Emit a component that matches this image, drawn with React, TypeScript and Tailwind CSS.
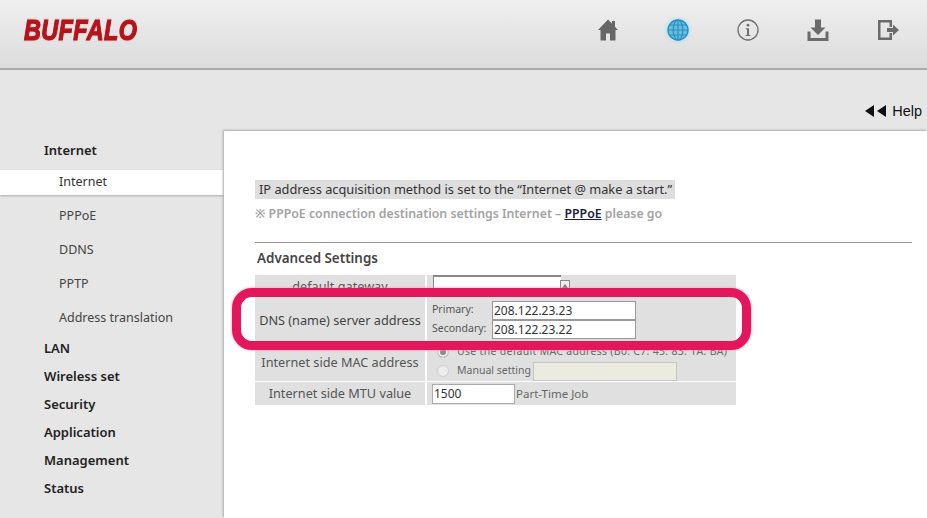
const font = { fontFamily: '"Noto Sans", "Noto Sans CJK JP", sans-serif' };

function Home() {
  return (
    <svg width="24" height="24" viewBox="0 0 24 24" fill="#666666">
      <path d="M12 1.500 2 12h2.500v10.500h5.500v-7h4v7h5.500V12H22l-3-3.200V3h-3v2.600z" />
    </svg>
  );
}

function Globe() {
  return (
    <svg width="24" height="24" viewBox="0 0 24 24" fill="none" stroke="#2c8fbc" strokeWidth="1.2" className="drop-shadow-[0_0_2px_#8fdcf8]">
      <circle cx="12" cy="12" r="10" fill="#62bfe3" strokeWidth="1.4" />
      <ellipse cx="12" cy="12" rx="4.800" ry="10" />
      <path d="M12 2v20M2 12h20M3.600 7h16.800M3.600 17h16.800" />
    </svg>
  );
}

function InfoCircle() {
  return (
    <svg width="24" height="24" viewBox="0 0 24 24" fill="none">
      <circle cx="12" cy="12" r="10" stroke="#6e6e6e" strokeWidth="1.300" />
      <circle cx="12" cy="7.200" r="1.400" fill="#6e6e6e" />
      <path d="M9.800 10.200h3.200v6.800h1.400v1h-4.800v-1h1.400v-5.800H9.800z" fill="#6e6e6e" />
    </svg>
  );
}

function Download() {
  return (
    <svg width="24" height="24" viewBox="0 0 24 24" fill="#6b6b6b">
      <path d="M9 1.500h6v8h4.500L12 17 4.500 9.500H9z" />
      <path d="M1.500 13.500h3v6.500h15v-6.500h3V23h-21z" />
    </svg>
  );
}

function Logout() {
  return (
    <svg width="24" height="24" viewBox="0 0 24 24" fill="#6b6b6b">
      <path d="M2 2h14v7h-2.500V4.500h-9v15h9V15H16v7H2z" />
      <path d="M11 10h6V6.500l6 5.500-6 5.500V14h-6z" />
    </svg>
  );
}

const groupTop = ["LAN", "Wireless set", "Security", "Application", "Management", "Status"];
const subs = ["PPPoE", "DDNS", "PPTP", "Address translation"];

export default function App() {
  return (
    <div className="relative w-[927px] h-[518px] overflow-hidden bg-[#e6e6e6] flex flex-col" style={font}>
      <header className="h-[70px] shrink-0 flex items-start justify-between bg-gradient-to-b from-[#efefef] to-[#dcdcdc] border-b-2 border-[#a9a9a9]">
        <div className="ml-[24px] mt-[13px] origin-left scale-x-[0.78] text-[30px] leading-[34px] font-black italic tracking-[0.5px] text-[#b3151d] [font-family:'Liberation_Sans',sans-serif] [-webkit-text-stroke:1.200px_#b3151d] drop-shadow-[0_0_1px_#f0a0a0]">
          BUFFALO
        </div>
        <div className="flex items-center gap-[46px] pt-[18px] pr-[27px]">
          <Home />
          <Globe />
          <InfoCircle />
          <Download />
          <Logout />
        </div>
      </header>
      <div className="h-[61px] shrink-0 flex items-end justify-end pb-[11px] pr-[5px]">
        <div className="flex items-center gap-[6px] text-[14.500px] leading-[18px] text-[#111] [font-family:'Liberation_Sans',sans-serif]">
          <span className="flex gap-[3px]">
            <span className="w-0 h-0 border-y-[6px] border-y-transparent border-r-[9px] border-r-[#111]" />
            <span className="w-0 h-0 border-y-[6px] border-y-transparent border-r-[9px] border-r-[#111]" />
          </span>
          Help
        </div>
      </div>
      <div className="flex flex-1 min-h-0">
        <nav className="w-[224px] shrink-0 pt-[6px] text-[13px] text-[#222]">
          <div className="h-[27px] mb-[6px] pl-[44px] flex items-center font-semibold">Internet</div>
          <div className="h-[25px] pl-[59px] flex items-center bg-white shadow-[0_1px_2px_#aaa] text-[#333] text-[12.500px] mb-[3px]">Internet</div>
          <div className="pt-[1px]">
            {subs.map((s) => (
              <div key={s} className="h-[34px] pl-[59px] flex items-center text-[#444] text-[12.500px]">{s}</div>
            ))}
          </div>
          {groupTop.map((g) => (
            <div key={g} className="h-[28px] pl-[44px] flex items-center font-semibold">{g}</div>
          ))}
        </nav>
        <main className="flex-1 bg-white shadow-[-1px_-1px_2px_#aaa] pl-[31px] pr-[15px] pt-[49px] text-[#333]">
          <div className="w-fit h-[19px] pl-[4px] pr-[3px] bg-[#dedede] text-[12.800px] leading-[19px] text-[#333] whitespace-nowrap">
            IP address acquisition method is set to the “Internet @ make a start.”
          </div>
          <div className="mt-[6px] h-[18px] text-[12.300px] leading-[18px] font-semibold text-[#a3a3a3] whitespace-nowrap">
            ※ PPPoE connection destination settings Internet – <span className="text-[#1c1c3c] underline">PPPoE</span> please go
          </div>
          <div className="mt-[19px] border-t border-[#999] pl-[2px] pt-[4px] h-[33px] text-[13.400px] leading-[22px] font-semibold text-[#444]">
            Advanced Settings
          </div>
          <div className="w-[481px] flex flex-col gap-[1px] bg-white text-[12.700px] text-[#555]">
            <div className="h-[21px] flex gap-[2px] overflow-hidden">
              <div className="w-[170px] bg-[#e0e0e0] text-center leading-[22px]">default gateway</div>
              <div className="flex-1 bg-[#e0e0e0] pl-[6px] flex items-start">
                <div className="w-[128px] h-[19px] bg-white border-t-2 border-l border-[#888]" />
                <div className="w-[10px] h-[12px] border border-[#888] mt-[5px] -ml-[1px] bg-[#eee] flex items-center justify-center">
                  <span className="w-0 h-0 border-x-[3px] border-x-transparent border-b-[4px] border-b-[#777]" />
                </div>
              </div>
            </div>
            <div className="h-[47px] flex gap-[2px]">
              <div className="w-[170px] bg-[#e0e0e0] flex items-center justify-center whitespace-nowrap text-[#444]">DNS (name) server address</div>
              <div className="flex-1 bg-[#e0e0e0] pl-[5px] pb-[2px] flex flex-col justify-center">
                {[["Primary:", "208.122.23.23"], ["Secondary:", "208.122.23.22"]].map(([l, v]) => (
                  <div key={l} className="flex items-center h-[19px]">
                    <span className="w-[60px] text-[10.500px] text-[#555]">{l}</span>
                    <div className="w-[144px] h-[19px] bg-white border border-[#999] pl-[1px] text-[12px] leading-[17px] text-[#333]">{v}</div>
                  </div>
                ))}
              </div>
            </div>
            <div className="h-[36px] flex gap-[2px]">
              <div className="w-[170px] bg-[#e0e0e0] flex items-center justify-center whitespace-nowrap">Internet side MAC address</div>
              <div className="flex-1 bg-[#e0e0e0] pl-[10px] text-[10.500px] text-[#666] flex flex-col">
                <div className="h-[14px] flex items-center gap-[8px] whitespace-nowrap tracking-[0.3px]">
                  <span className="w-[12px] h-[12px] rounded-full border border-[#ccc] bg-[#888] shadow-[inset_0_0_0_2px_#eee]" />
                  Use the default MAC address (B0: C7: 45: 83: 1A: BA)
                </div>
                <div className="mt-[3px] h-[18px] flex items-center gap-[8px] whitespace-nowrap">
                  <span className="w-[12px] h-[12px] rounded-full border border-[#ccc] bg-[#eee]" />
                  Manual setting
                  <div className="-ml-[6px] w-[144px] h-[19px] bg-[#ebebe0] border border-[#c4c4c4]" />
                </div>
              </div>
            </div>
            <div className="h-[23px] flex gap-[2px]">
              <div className="w-[170px] bg-[#e0e0e0] flex items-center justify-center whitespace-nowrap">Internet side MTU value</div>
              <div className="flex-1 bg-[#e0e0e0] pl-[5px] flex items-center gap-[1px]">
                <div className="w-[83px] h-[20px] bg-white border border-[#aaa] pl-[1px] text-[12px] leading-[18px] text-[#333]">1500</div>
                <span className="text-[11.500px] text-[#666]">Part-Time Job</span>
              </div>
            </div>
          </div>
        </main>
      </div>
      <div className="absolute left-[232px] top-[288px] w-[519px] h-[62px] rounded-[20px] border-[9px] border-[#e4165c] shadow-[0_0_3px_#f59ab8]" />
    </div>
  );
}
